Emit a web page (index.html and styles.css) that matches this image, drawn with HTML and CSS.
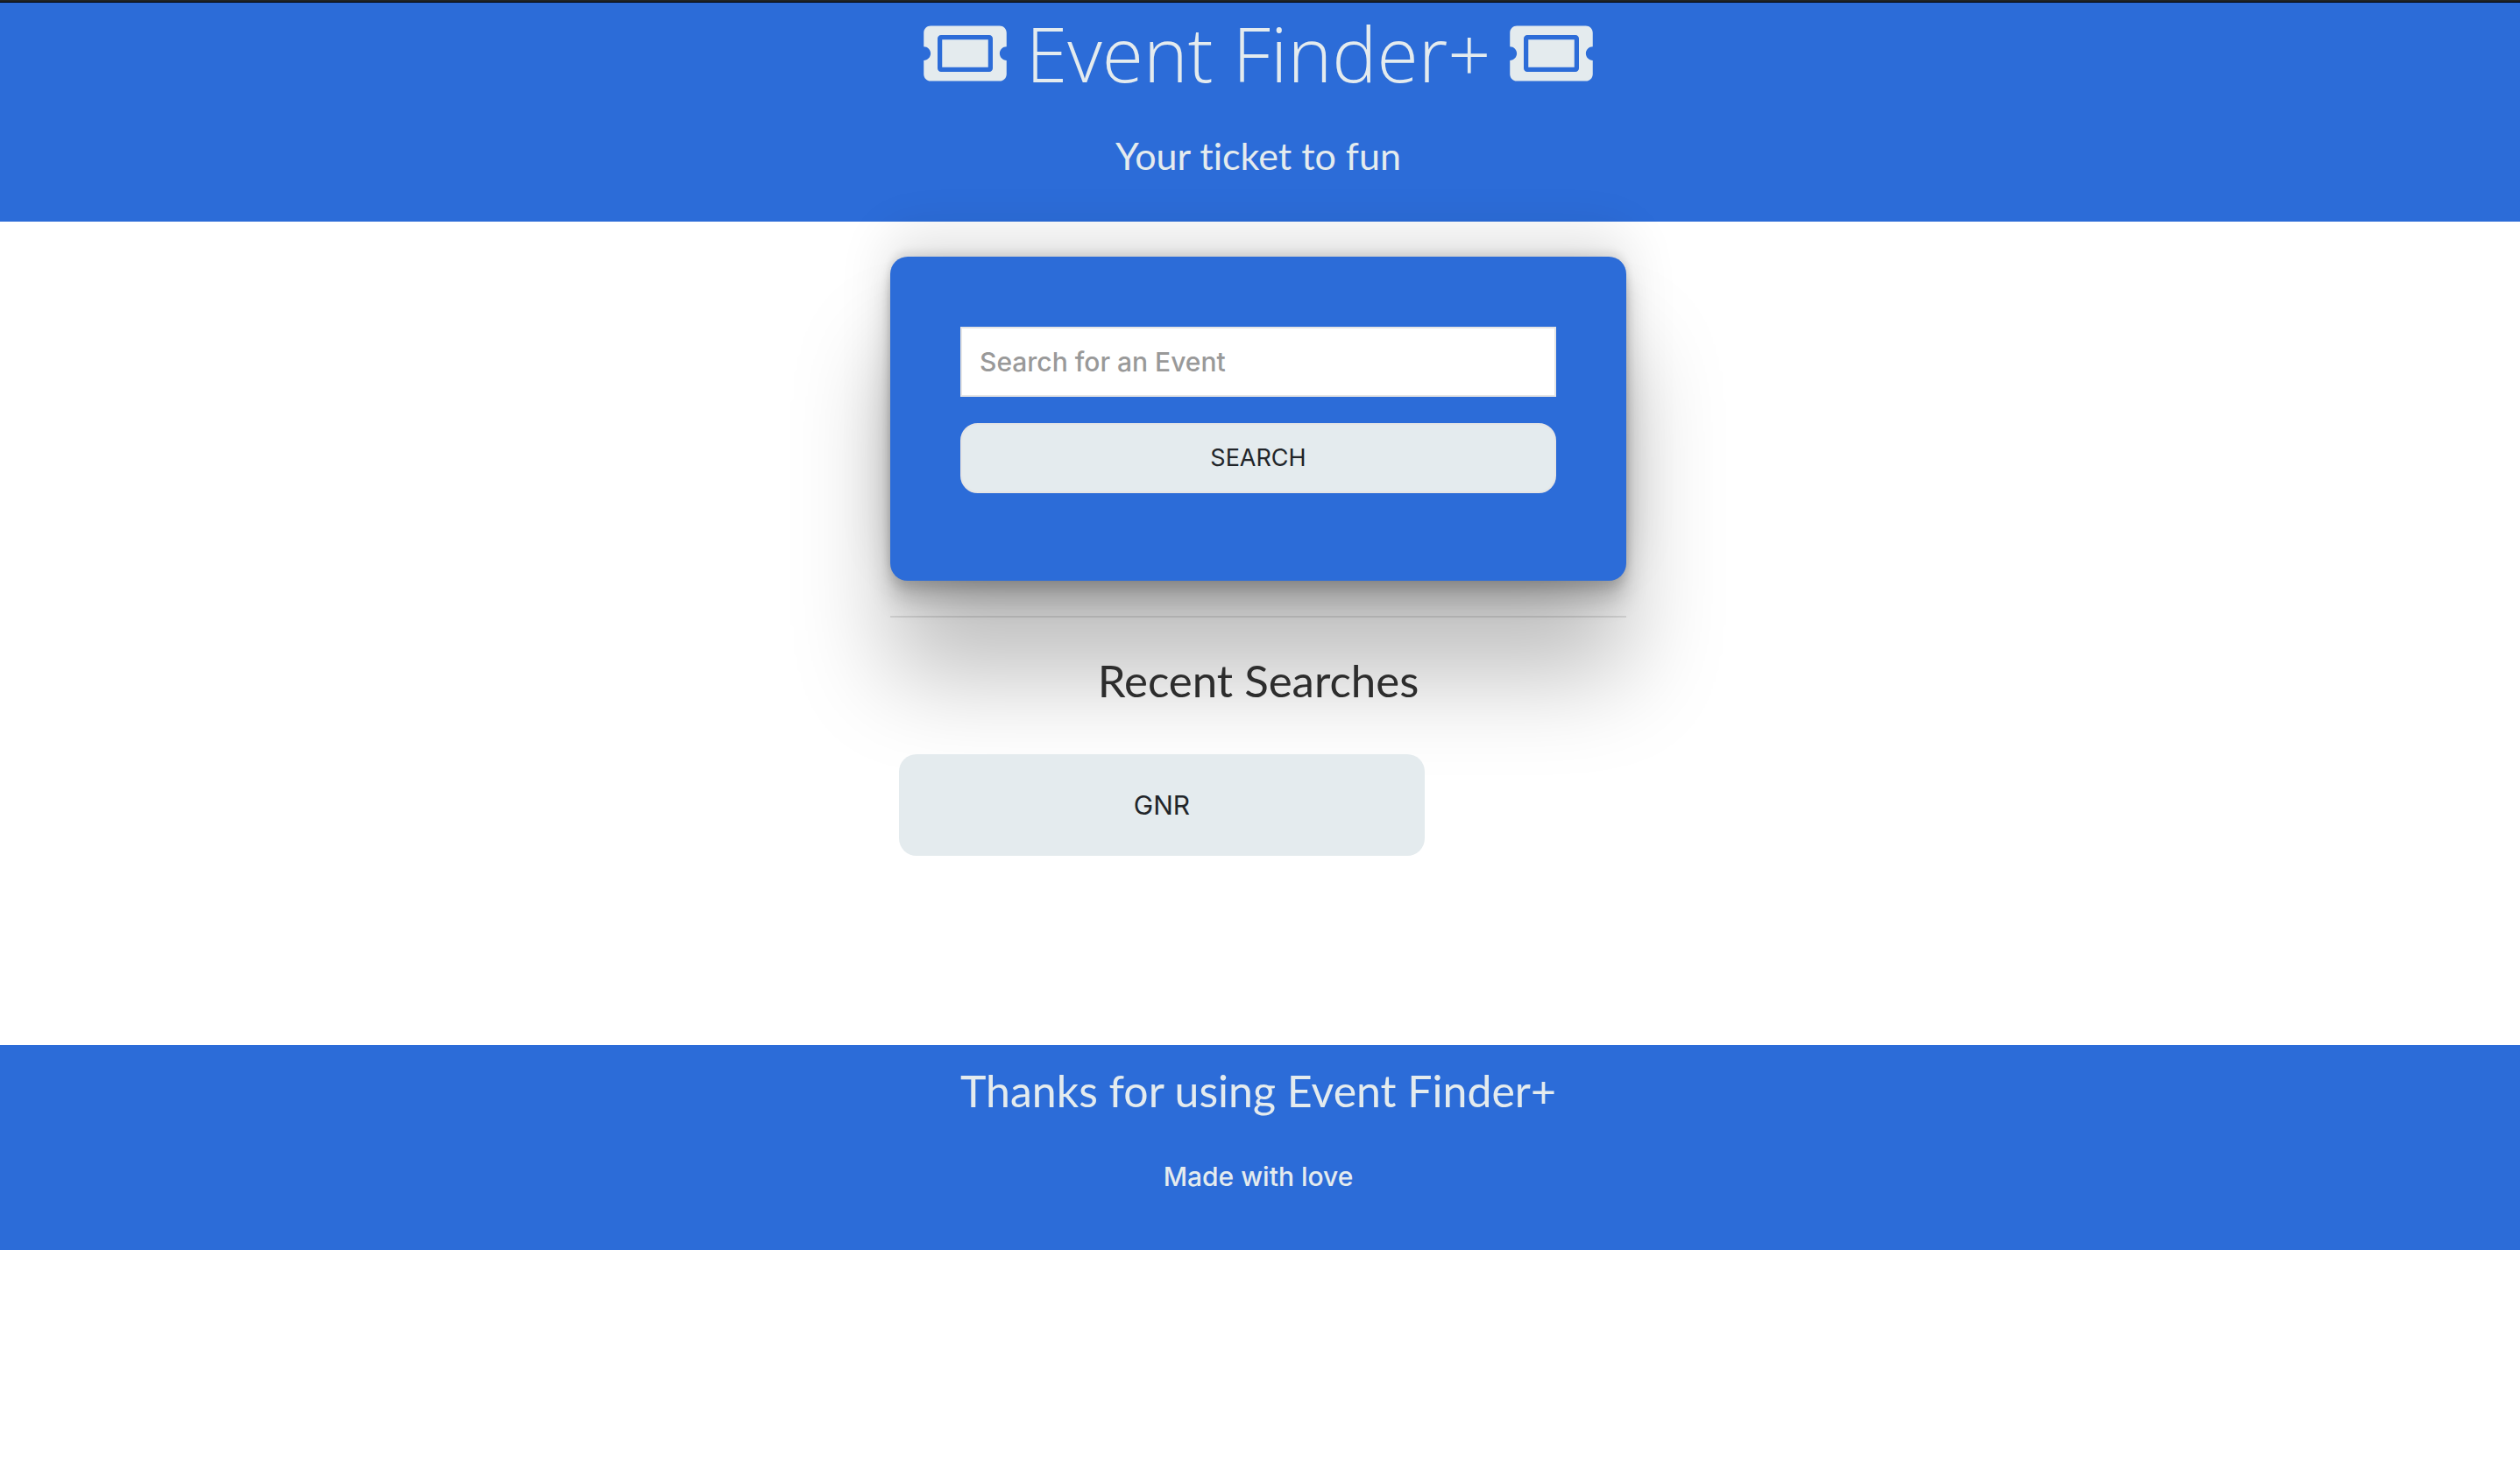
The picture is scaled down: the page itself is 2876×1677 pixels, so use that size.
FILE: index.html
```html
<!DOCTYPE html>
<html lang="en">
<head>
  <meta charset="utf-8">
  <meta name="viewport" content="width=device-width, initial-scale=1">
  <title>Event Finder+</title>
  <link rel="stylesheet" href="styles.css">
</head>
<body>
  <svg width="0" height="0" class="sprite" aria-hidden="true">
    <symbol id="ticket" viewBox="0 0 576 512">
      <path d="M128 160h320v192H128V160zm400 96c0 26.51 21.49 48 48 48v96c0 26.51-21.49 48-48 48H48c-26.51 0-48-21.49-48-48v-96c26.51 0 48-21.49 48-48s-21.49-48-48-48v-96c0-26.51 21.49-48 48-48h480c26.51 0 48 21.49 48 48v96c-26.51 0-48 21.49-48 48zm-48-104c0-13.255-10.745-24-24-24H120c-13.255 0-24 10.745-24 24v208c0 13.255 10.745 24 24 24h336c13.255 0 24-10.745 24-24V152z"/>
    </symbol>
  </svg>

  <header class="banner">
    <h1 class="title">
      <svg class="ticket" aria-hidden="true"><use href="#ticket"/></svg>
      <span>Event Finder+</span>
      <svg class="ticket" aria-hidden="true"><use href="#ticket"/></svg>
    </h1>
    <p class="tagline">Your ticket to fun</p>
  </header>

  <main class="page">
    <div class="content">
      <form class="search-card">
        <input class="search-input" type="text" placeholder="Search for an Event" aria-label="Search for an Event">
        <button class="search-button" type="button">Search</button>
      </form>
      <hr class="divider">
      <section>
        <h2 class="heading">Recent Searches</h2>
        <div class="recent-list">
          <button class="recent-button" type="button">GNR</button>
        </div>
      </section>
    </div>
  </main>

  <footer class="footer">
    <h2 class="footer-title">Thanks for using Event Finder+</h2>
    <p class="footer-text">Made with love</p>
  </footer>
</body>
</html>
```
FILE: styles.css
```css
:root {
  --blue: #2c6cd8;
  --mist: #e4ebee;
  --ink: #212529;
}

* {
  box-sizing: border-box;
}

body {
  margin: 0;
  background: #fff;
  color: var(--ink);
  font: 400 30px/44px Inter, "Liberation Sans", sans-serif;
  border-top: 2px solid #212526;
}

.sprite {
  display: block;
}

h1, h2, p {
  margin: 0;
  text-align: center;
}

.banner {
  padding: 8px 44px 48px 40px;
  border-top: 1px solid #000;
  background: var(--blue);
  color: var(--mist);
}

.title {
  display: flex;
  justify-content: center;
  align-items: center;
  gap: 22px;
  font: 300 86px/100px "Open Sans", sans-serif;
}

.ticket {
  width: 95px;
  height: 84px;
  fill: currentColor;
}

.tagline {
  margin-top: 40px;
  font: 400 43px/54px Lato, sans-serif;
  font-variant-ligatures: none;
}

.page {
  padding: 40px 44px 216px 40px;
}

.content {
  max-width: 840px;
  margin: 0 auto;
}

.search-card {
  display: flex;
  flex-direction: column;
  gap: 30px;
  padding: 80px 80px 100px;
  border-radius: 20px;
  background: var(--blue);
  box-shadow:
    0 108px 110px rgba(0, 0, 0, 0.25),
    0 -24px 60px rgba(0, 0, 0, 0.12),
    0 8px 12px rgba(0, 0, 0, 0.12),
    0 24px 26px rgba(0, 0, 0, 0.17),
    0 -6px 10px rgba(0, 0, 0, 0.09);
}

.search-input {
  width: 100%;
  height: 80px;
  padding: 0 20px;
  border: 2px solid #e5e5e5;
  border-radius: 0;
  background: #fff;
  color: #666;
  font: inherit;
  font-weight: 500;
}

.search-input::placeholder {
  color: #999;
  opacity: 1;
}

.search-button {
  height: 80px;
  border: 2px solid #e5e5e5;
  border-radius: 20px;
  background: var(--mist);
  color: var(--ink);
  font: inherit;
  font-size: 27px;
  text-transform: uppercase;
}

.divider {
  height: 2px;
  margin: 40px 0;
  border: 0;
  background: rgba(0, 0, 0, 0.1);
}

.heading {
  color: #2d2d2d;
  font: 400 51px/64px Lato, sans-serif;
}

.recent-list {
  display: flex;
  flex-wrap: wrap;
  padding: 0 10px;
  margin-top: 52px;
}

.recent-button {
  width: 600px;
  height: 116px;
  border: 0;
  border-radius: 20px;
  background: var(--mist);
  color: var(--ink);
  font: inherit;
}

.footer {
  padding: 20px 44px 62px 40px;
  background: var(--blue);
  color: var(--mist);
}

.footer-title {
  font: 400 50px/64px Lato, sans-serif;
}

.footer-text {
  margin-top: 44px;
  font-weight: 500;
}
```
